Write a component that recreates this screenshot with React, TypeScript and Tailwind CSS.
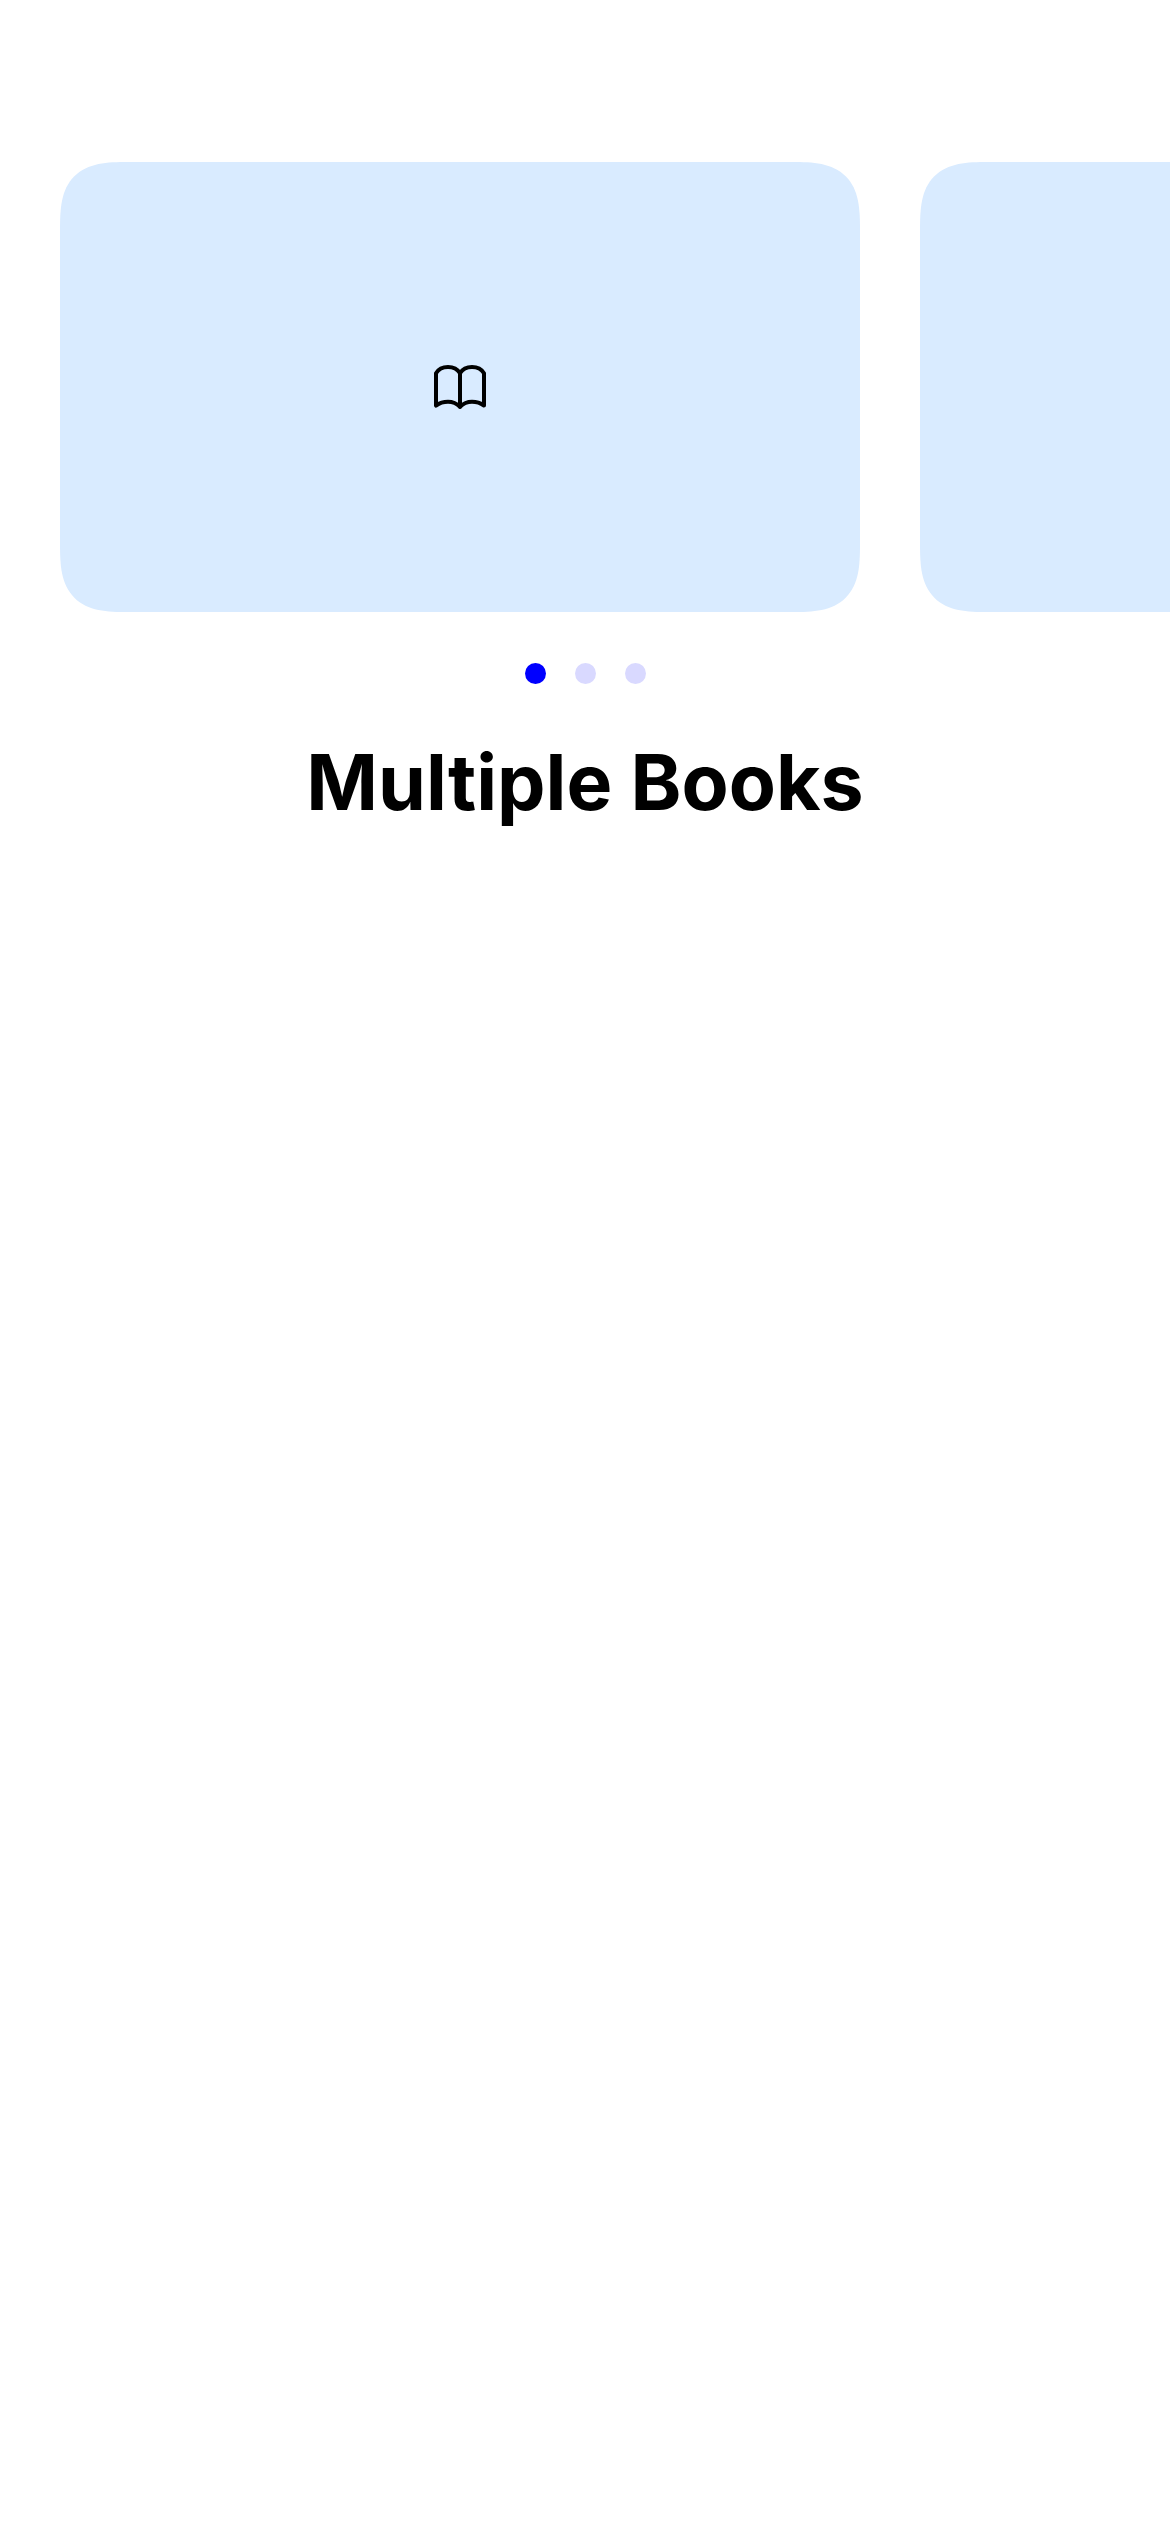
import { useState } from "react";

const books = ["Book one", "Book two", "Book three"];

function BookIcon() {
  return (
    <svg
      viewBox="0 0 52 44"
      className="h-[44px] w-[52px]"
      fill="none"
      stroke="currentColor"
      strokeWidth="4"
      strokeLinecap="round"
      strokeLinejoin="round"
      aria-hidden="true"
    >
      <path d="M2 8.2C4.4 4.2 9 2 14 2S23.5 4.2 26 8.2C28.5 4.2 33 2 38 2S47.6 4.2 50 8.2V40.6C46.4 38 42.4 36.8 38 36.8S29.6 38.2 26 41.8C22.4 38.2 18.4 36.8 14 36.8S5.6 38 2 40.6Z" />
      <path d="M26 8.2V41.8" />
    </svg>
  );
}

export default function App() {
  const [active, setActive] = useState(0);

  return (
    <main className="min-h-screen overflow-hidden bg-white pt-[162px] font-['Inter',sans-serif] text-black">
      <ul className="flex gap-[60px] px-[60px]">
        {books.map((book, i) => (
          <li
            key={book}
            aria-label={book}
            aria-hidden={i > active + 1}
            className="flex aspect-video w-[calc(100%-250px)] shrink-0 items-center justify-center rounded-[48px] bg-[#d9ebff] supports-[corner-shape:squircle]:rounded-[68px] supports-[corner-shape:squircle]:[corner-shape:superellipse(1.55)]"
          >
            <BookIcon />
          </li>
        ))}
      </ul>

      <div className="mt-[51px] flex justify-center gap-[29px]">
        {books.map((book, i) => (
          <button
            key={book}
            type="button"
            aria-label={`Show ${book}`}
            aria-current={i === active}
            onClick={() => setActive(i)}
            className={
              i === active
                ? "size-[21px] rounded-full bg-[#0000ff]"
                : "size-[21px] rounded-full bg-[#d9d9ff]"
            }
          />
        ))}
      </div>

      <h1 className="mt-[50px] text-center text-[77px] leading-[96px] font-bold">
        Multiple Books
      </h1>
    </main>
  );
}
